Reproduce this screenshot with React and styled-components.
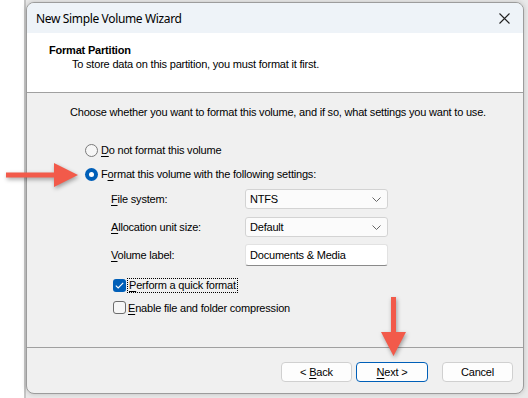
import React from 'react';
import styled, { createGlobalStyle } from 'styled-components';

const Global = createGlobalStyle`
  html, body { margin: 0; padding: 0; background: #fff; }
  body { width: 528px; height: 398px; overflow: hidden; }
  * { box-sizing: border-box; }
`;

const Page = styled.div`
  position: relative;
  width: 528px;
  height: 398px;
  display: flex;
  padding-left: 24px;
  background: #fff;
  font-family: "Liberation Sans", Arial, sans-serif;
  color: #000;
`;

const BackWindow = styled.div`
  flex: 1;
  display: flex;
  border-left: 2px solid #c6c6c6;
  background: #e9e9e9;
  padding: 2px 4px 4px 0;
`;

const Dialog = styled.div`
  flex: 1;
  display: flex;
  flex-direction: column;
  border: 1px solid #9c9c9c;
  border-radius: 8px;
  overflow: hidden;
  background: #f0f0f0;
  box-shadow: 0 0 5px rgba(0, 0, 0, 0.18);
`;

const TitleBar = styled.div`
  height: 30px;
  flex: none;
  display: flex;
  align-items: center;
  justify-content: space-between;
  padding: 0 8px 0 9px;
  background: #eef3f8;
  font-family: "Noto Sans", sans-serif;
  font-size: 12px;
  letter-spacing: -0.35px;
`;

const CloseBtn = styled.div`
  width: 22px;
  height: 22px;
  display: flex;
  align-items: center;
  justify-content: center;
`;

const Header = styled.div`
  height: 60px;
  flex: none;
  background: #fff;
  border-bottom: 1px solid #a0a0a0;
  padding: 10px 0 0 22px;
  font-size: 11px;
  line-height: 14px;
  letter-spacing: -0.2px;
`;

const HeaderTitle = styled.div`
  font-weight: bold;
`;

const HeaderSub = styled.div`
  padding-left: 23px;
`;

const Body = styled.div`
  height: 255px;
  flex: none;
  border-bottom: 1px solid #a0a0a0;
  padding-top: 12px;
  font-size: 11px;
  line-height: 14px;
  letter-spacing: -0.2px;
  display: flex;
  flex-direction: column;
`;

const Intro = styled.div`
  padding-left: 43px;
`;

const RadioGroup = styled.div`
  display: flex;
  flex-direction: column;
  gap: 8px;
  margin-top: 23px;
  padding-left: 58px;
`;

const Row = styled.label`
  display: flex;
  align-items: center;
  height: ${p => p.h || 16}px;
`;

const RadioCircle = styled.span`
  width: 13px;
  height: 13px;
  border-radius: 50%;
  flex: none;
  margin-right: 3px;
  display: flex;
  align-items: center;
  justify-content: center;
  background: ${p => (p.checked ? '#005fb8' : '#f6f6f6')};
  border: ${p => (p.checked ? 'none' : '1px solid #7a7a7a')};
  &::after {
    content: '';
    display: ${p => (p.checked ? 'block' : 'none')};
    width: 5px;
    height: 5px;
    border-radius: 50%;
    background: #fff;
  }
`;

const Fields = styled.div`
  display: grid;
  grid-template-columns: 134px 143px;
  grid-template-rows: 20px 20px 22px;
  row-gap: 8px;
  align-items: center;
  margin-top: 7px;
  padding-left: 84px;
  & > :nth-child(5), & > :nth-child(6) { margin-top: -2px; }
`;

const FieldLabel = styled.div``;

const Combo = styled.div`
  height: 20px;
  display: flex;
  align-items: center;
  justify-content: space-between;
  padding: 0 6px 0 4px;
  background: #fbfbfb;
  border: 1px solid #d3d3d3;
  border-radius: 3px;
`;

const TextBox = styled.div`
  height: 22px;
  display: flex;
  align-items: center;
  padding: 0 4px;
  background: #fff;
  border: 1px solid #e2e2e2;
  border-bottom-color: #8a8a8a;
  border-radius: 3px;
`;

const CheckGroup = styled.div`
  display: flex;
  flex-direction: column;
  gap: 7px;
  margin-top: 11px;
  padding-left: 86px;
`;

const CheckBox = styled.span`
  width: 13px;
  height: 13px;
  flex: none;
  margin-right: 2px;
  border-radius: 3px;
  display: flex;
  align-items: center;
  justify-content: center;
  background: ${p => (p.checked ? '#005fb8' : '#f6f6f6')};
  border: ${p => (p.checked ? 'none' : '1px solid #6c6c6c')};
`;

const Focus = styled.span`
  outline: 1px dotted #000;
  outline-offset: 0;
  padding: 0 1px;
  line-height: 13px;
`;

const U = styled.span`
  text-decoration: underline;
  text-underline-offset: 2px;
`;

const Footer = styled.div`
  flex: 1;
  display: flex;
  justify-content: flex-end;
  align-items: flex-start;
  padding: 14px 10px 0 0;
  font-size: 11px;
  letter-spacing: -0.2px;
`;

const Button = styled.div`
  width: ${p => p.w || 72}px;
  height: 20px;
  margin-left: ${p => p.gap || 0}px;
  display: flex;
  align-items: center;
  justify-content: center;
  background: #fdfdfd;
  border: 1px solid ${p => (p.primary ? '#005fb8' : '#d0d0d0')};
  border-radius: 4px;
`;

const ArrowLayer = styled.svg`
  position: absolute;
  left: 0;
  top: 0;
  pointer-events: none;
  filter: drop-shadow(1px 2px 2px rgba(0, 0, 0, 0.35));
`;

const Chevron = () => (
  <svg width="9" height="5" viewBox="0 0 9 5">
    <path d="M0.5 0.5 L4.5 4.5 L8.5 0.5" fill="none" stroke="#666" strokeWidth="1" />
  </svg>
);

export default function App() {
  return (
    <>
      <Global />
      <Page>
        <BackWindow>
          <Dialog>
            <TitleBar>
              <span>New Simple Volume Wizard</span>
              <CloseBtn>
                <svg width="11" height="11" viewBox="0 0 11 11">
                  <path d="M0.5 0.5 L10.5 10.5 M10.5 0.5 L0.5 10.5" stroke="#222" strokeWidth="1.1" />
                </svg>
              </CloseBtn>
            </TitleBar>
            <Header>
              <HeaderTitle>Format Partition</HeaderTitle>
              <HeaderSub>To store data on this partition, you must format it first.</HeaderSub>
            </Header>
            <Body>
              <Intro>Choose whether you want to format this volume, and if so, what settings you want to use.</Intro>
              <RadioGroup>
                <Row>
                  <RadioCircle />
                  <span><U>D</U>o not format this volume</span>
                </Row>
                <Row>
                  <RadioCircle checked />
                  <span>F<U>o</U>rmat this volume with the following settings:</span>
                </Row>
              </RadioGroup>
              <Fields>
                <FieldLabel><U>F</U>ile system:</FieldLabel>
                <Combo><span>NTFS</span><Chevron /></Combo>
                <FieldLabel><U>A</U>llocation unit size:</FieldLabel>
                <Combo><span>Default</span><Chevron /></Combo>
                <FieldLabel><U>V</U>olume label:</FieldLabel>
                <TextBox>Documents &amp; Media</TextBox>
              </Fields>
              <CheckGroup>
                <Row h={15}>
                  <CheckBox checked>
                    <svg width="9" height="7" viewBox="0 0 9 7">
                      <path d="M0.8 3.6 L3.2 6 L8.2 0.8" fill="none" stroke="#fff" strokeWidth="1.1" />
                    </svg>
                  </CheckBox>
                  <Focus><U>P</U>erform a quick format</Focus>
                </Row>
                <Row h={15}>
                  <CheckBox />
                  <span><U>E</U>nable file and folder compression</span>
                </Row>
              </CheckGroup>
            </Body>
            <Footer>
              <Button w={71}><span>&lt; <U>B</U>ack</span></Button>
              <Button primary w={72} gap={4}><span><U>N</U>ext &gt;</span></Button>
              <Button w={71} gap={14}><span>Cancel</span></Button>
            </Footer>
          </Dialog>
        </BackWindow>
        <ArrowLayer width="528" height="398" viewBox="0 0 528 398">
          <path d="M6 172.5 H54 V163 L78 175 L54 187 V177.5 H6 Z" fill="#f25a4a" />
          <path d="M391 297 H396 V332 H406 L393.5 356 L381 332 H391 Z" fill="#f25a4a" />
        </ArrowLayer>
      </Page>
    </>
  );
}
